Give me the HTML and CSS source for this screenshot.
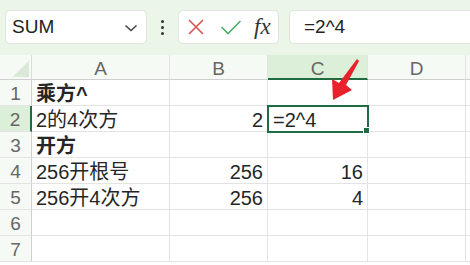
FILE: index.html
```html
<!doctype html>
<html>
<head>
<meta charset="utf-8">
<title>乘方与开方</title>
<link rel="stylesheet" href="styles.css">
</head>
<body>
<div class="toolbar">
	<div class="namebox">
		<span>SUM</span>
		<svg class="chev" width="14" height="10" viewBox="0 0 14 10"><path d="M1.5 2.5 L7 7.5 L12.5 2.5" fill="none" stroke="#444" stroke-width="1.6"/></svg>
	</div>
	<div class="dots"><i></i><i></i><i></i></div>
	<div class="fbtns">
		<svg width="18" height="18" viewBox="0 0 18 18"><path d="M2 2 L16 16 M16 2 L2 16" stroke="#d9534f" stroke-width="1.6" fill="none"/></svg>
		<svg width="22" height="16" viewBox="0 0 22 16"><path d="M1.5 8 L8 14.5 L20.5 2" stroke="#4caf6a" stroke-width="1.6" fill="none"/></svg>
		<span class="fx">fx</span>
	</div>
	<div class="formula">=2^4</div>
</div>

<div class="sheet">
	<div class="corner"></div>
	<div class="colh">A</div>
	<div class="colh">B</div>
	<div class="colh on">C</div>
	<div class="colh">D</div>
	<div class="colh last"></div>

	<div class="rowh">1</div>
	<div class="cell b">乘方^</div><div class="cell"></div><div class="cell"></div><div class="cell"></div><div class="cell last"></div>

	<div class="rowh on">2</div>
	<div class="cell">2的4次方</div><div class="cell num">2</div><div class="cell sel">=2^4</div><div class="cell"></div><div class="cell last"></div>

	<div class="rowh">3</div>
	<div class="cell b">开方</div><div class="cell"></div><div class="cell"></div><div class="cell"></div><div class="cell last"></div>

	<div class="rowh">4</div>
	<div class="cell">256开根号</div><div class="cell num">256</div><div class="cell num">16</div><div class="cell"></div><div class="cell last"></div>

	<div class="rowh">5</div>
	<div class="cell">256开4次方</div><div class="cell num">256</div><div class="cell num">4</div><div class="cell"></div><div class="cell last"></div>

	<div class="rowh">6</div>
	<div class="cell"></div><div class="cell"></div><div class="cell"></div><div class="cell"></div><div class="cell last"></div>

	<div class="rowh">7</div>
	<div class="cell"></div><div class="cell"></div><div class="cell"></div><div class="cell"></div><div class="cell last"></div>

	<svg class="arrow" width="40" height="50" viewBox="0 0 40 50"><path d="M27 2 L29 4 L16 28 L22 33 L3 43 L2 22 L9 26 Z" fill="#e8212b"/></svg>
</div>
</body>
</html>
```

FILE: styles.css
```css
*{margin:0; padding:0; box-sizing:border-box;}
body{width:470px; height:265px; overflow:hidden; background:#fff; font-family:"Liberation Sans","Noto Sans CJK SC",sans-serif; color:#262626;}

.toolbar{height:55px; background:#ebf5e8; display:flex; align-items:flex-start; padding:10px 0 0 5px;}
.namebox{width:142px; height:34px; background:#fff; border:1px solid #dfe6dd; border-radius:5px; display:flex; align-items:center; justify-content:space-between; padding:0 8px 0 6px; font-size:19px; color:#222;}
.chev{margin-top:2px;}
.dots{width:31px; height:34px; display:flex; flex-direction:column; align-items:center; justify-content:center; gap:3px;}
.dots i{display:block; width:3px; height:3px; background:#333; border-radius:50%;}
.fbtns{width:101px; height:34px; background:#fff; border:1px solid #dfe6dd; border-radius:5px; display:flex; align-items:center; padding:0 0 0 8px; gap:15px;}
.fx{font-family:"Liberation Serif","DejaVu Serif",serif; font-style:italic; font-size:23px; color:#333; margin-left:-3px;}
.formula{flex:1; height:34px; margin-left:10px; background:#fff; border:1px solid #dfe6dd; border-right:none; border-radius:5px 0 0 5px; font-size:19px; line-height:32px; padding-left:14px; color:#222;}

.sheet{position:relative; display:grid; grid-template-columns:32px 138px 98px 100px 98px 1fr; grid-template-rows:25px repeat(7,26px); font-size:20px;}
.corner{background:#f6faf5 linear-gradient(135deg, transparent 62%, #dbe9d8 62%) no-repeat; background-size:22px 22px; background-position:right 2px bottom 2px; border-right:1px solid #dcdcdc; border-bottom:1px solid #cfcfcf;}
.colh{background:#f6faf5; border-right:1px solid #e3e3e3; border-bottom:1px solid #cfcfcf; text-align:center; color:#666; font-size:19px; line-height:25px; padding-top:1px;}
.colh.on{background:#dcefd8; border-bottom:2px solid #1f6b42;}
.rowh{background:#f6faf5; border-right:1px solid #cfcfcf; border-bottom:1px solid #e3e3e3; text-align:center; color:#666; font-size:19px; line-height:26px; padding-top:1px;}
.rowh.on{background:#dcefd8; border-right:2px solid #1f6b42;}
.cell{border-right:1px solid #e3e3e3; border-bottom:1px solid #e3e3e3; line-height:26px; padding:1px 4px 0 4px; white-space:nowrap; overflow:hidden;}
.cell.last{border-right:none;}
.colh.last{border-right:none;}
.cell.b{font-weight:bold;}
.cell.num{text-align:right;}
.cell.sel{position:relative; overflow:visible; outline:2px solid #1f6b42; outline-offset:-1px; padding-left:5px;}
.cell.sel::after{content:""; position:absolute; right:-3px; bottom:-3px; width:5px; height:5px; background:#1f6b42; border:1px solid #fff;}
.arrow{position:absolute; left:330px; top:2px;}
```
